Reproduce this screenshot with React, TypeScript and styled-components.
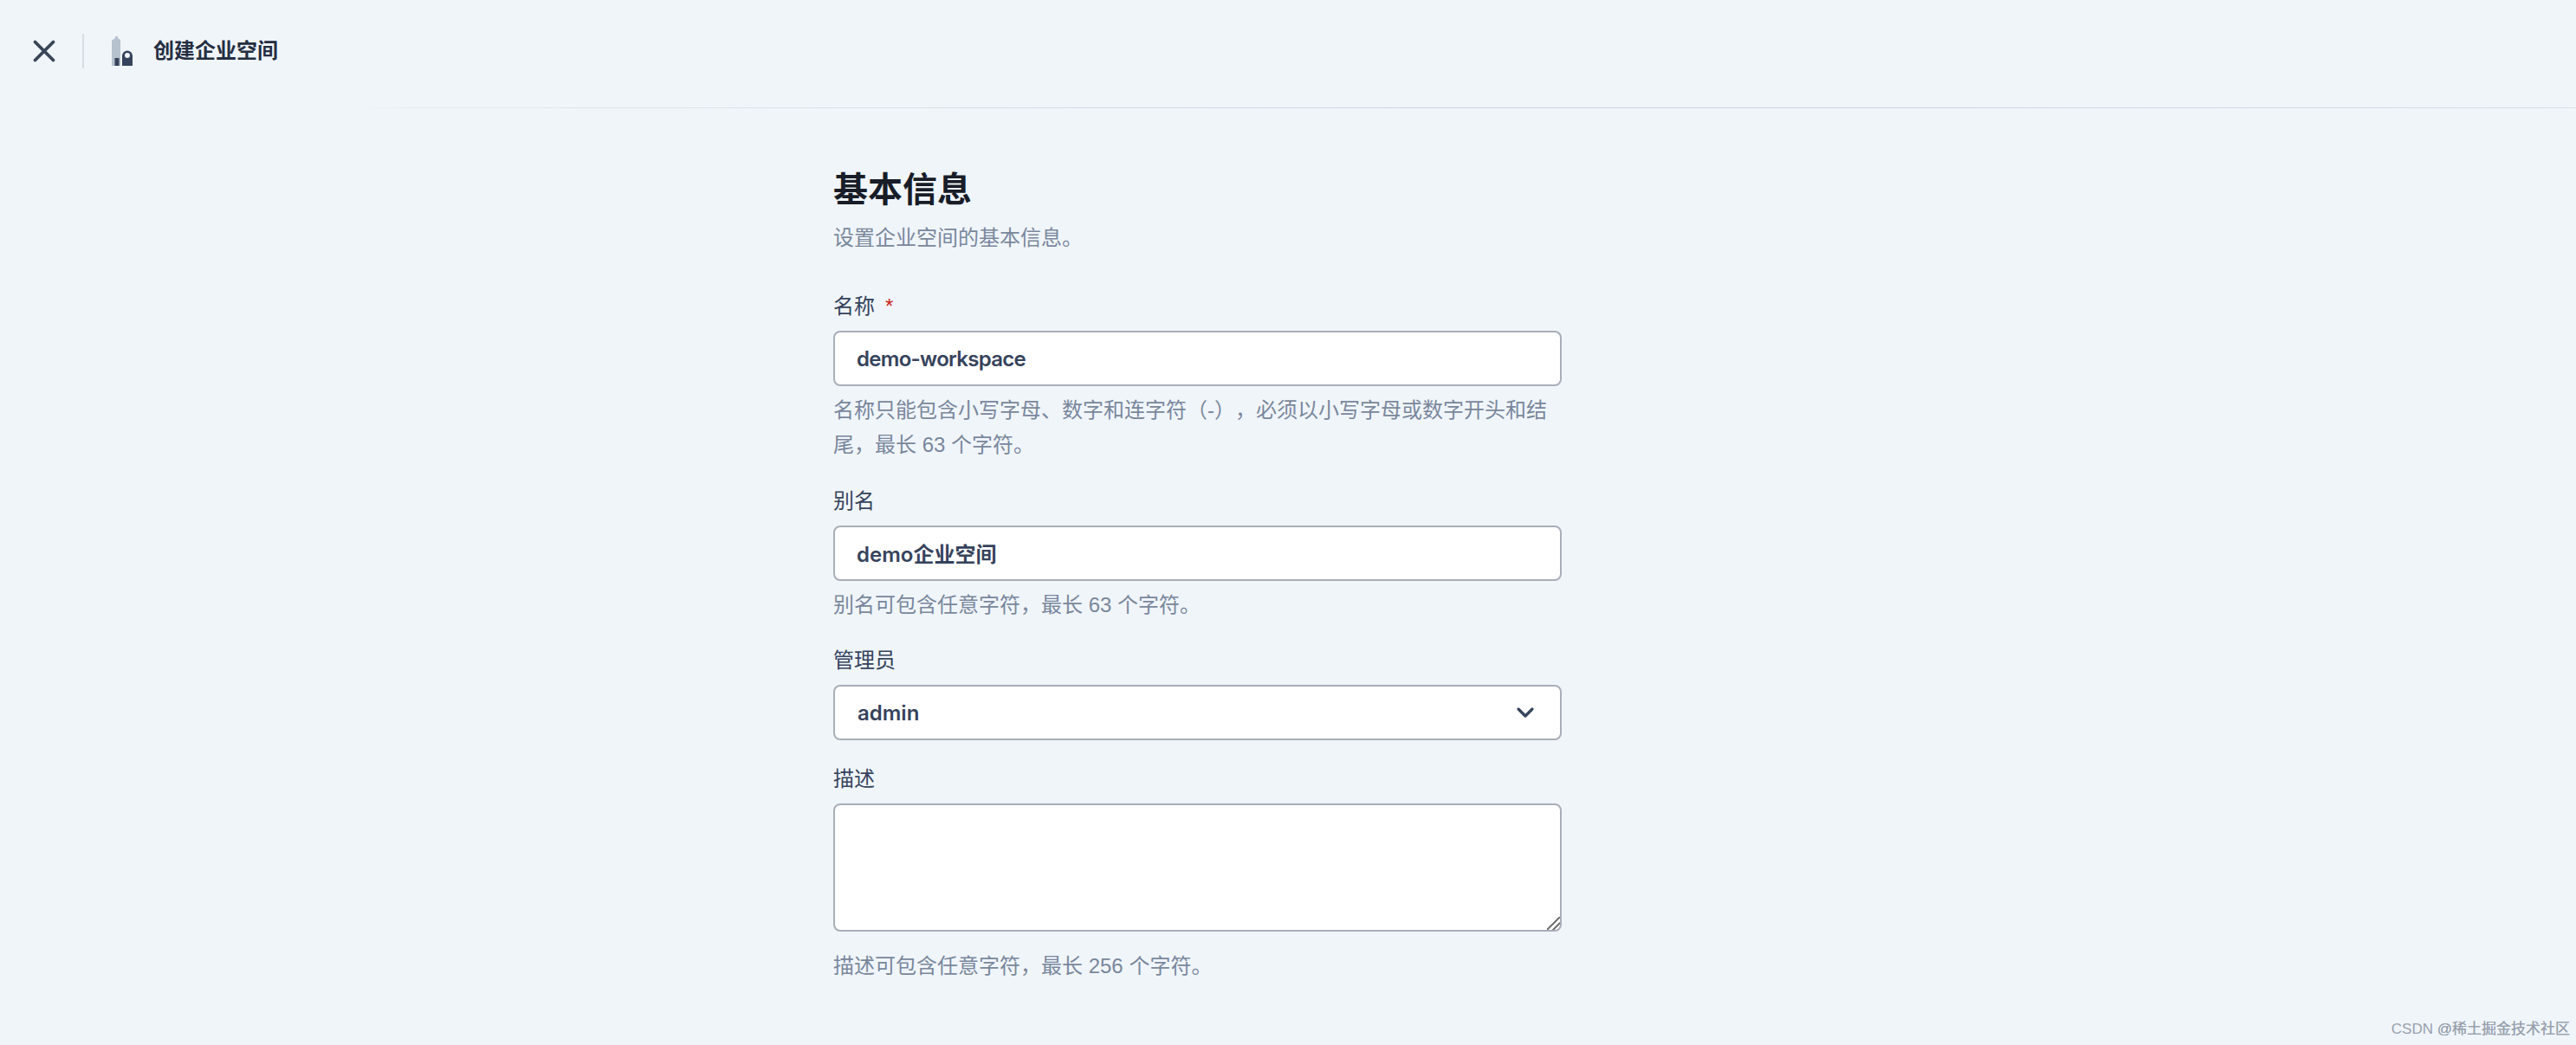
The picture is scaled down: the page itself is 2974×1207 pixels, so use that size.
import * as React from 'react';
import styled, { createGlobalStyle } from 'styled-components';
import { ChevronDown, X } from 'lucide-react';

const fontStack = `"Liberation Sans", "Noto Sans CJK SC", sans-serif`;
const controlFont = `Inter, "Noto Sans CJK SC", sans-serif`;

const GlobalStyle = createGlobalStyle`
  html, body {
    margin: 0;
    padding: 0;
    background: #f0f5fa;
  }
  body {
    font-family: ${fontStack};
    text-spacing-trim: space-all;
    overflow: hidden;
  }
`;

const Page = styled.div`
  position: relative;
  height: 1207px;
  background: #f0f5fa;
  overflow: hidden;
`;

const Header = styled.header`
  box-sizing: border-box;
  height: 125px;
  display: flex;
  align-items: center;
  padding: 0 0 7px 28px;
  border-bottom: 1px solid;
  border-image: linear-gradient(
      90deg,
      rgba(207, 213, 224, 0) 0%,
      rgba(207, 213, 224, 0) 14%,
      rgba(207, 213, 224, 0.35) 16%,
      rgba(207, 213, 224, 0.6) 30%,
      #cfd5e0 55%,
      #cfd5e0 75%,
      rgba(207, 213, 224, 0.7) 100%
    )
    1;
`;

const CloseButton = styled.button`
  width: 46px;
  height: 46px;
  padding: 0;
  border: 0;
  background: none;
  color: #3a4658;
  display: flex;
  align-items: center;
  justify-content: center;
`;

const Divider = styled.span`
  width: 2px;
  height: 40px;
  margin: 0 32px 0 21px;
  background: #d8dee5;
`;

const Title = styled.h1`
  margin: 0 0 0 24px;
  font-size: 24px;
  line-height: 32px;
  font-weight: 700;
  color: #242e42;
`;

const Main = styled.main`
  width: 841px;
  margin-left: 962px;
  padding-top: 70px;
`;

const Heading = styled.h2`
  margin: 0;
  font-size: 40px;
  line-height: 48px;
  font-weight: 700;
  color: #181d28;
`;

const Subheading = styled.p`
  margin: 14px 0 45px;
  font-size: 24px;
  line-height: 36px;
  color: #79879c;
`;

const Field = styled.div`
  margin-bottom: 28.5px;
`;

const Label = styled.label`
  display: block;
  margin-bottom: 12px;
  font-size: 24px;
  line-height: 32px;
  color: #36435c;
`;

const Required = styled.span`
  margin-left: 12px;
  color: #ca2621;
`;

const controlStyle = `
  box-sizing: border-box;
  display: block;
  width: 100%;
  background: #fff;
  border: 2px solid #a9aeb8;
  border-radius: 8px;
  font-family: ${controlFont};
  font-size: 24px;
  font-weight: 600;
  color: #36435c;
  outline: none;
`;

const TextInput = styled.input<{ $tight?: boolean }>`
  ${controlStyle}
  height: 64px;
  padding: 0 25px;
  letter-spacing: ${p => (p.$tight ? '-0.7px' : 'normal')};
`;

const SelectBox = styled.div`
  ${controlStyle}
  height: 64px;
  padding: 0 24px 0 26px;
  display: flex;
  align-items: center;
  justify-content: space-between;
`;

const TextArea = styled.textarea`
  ${controlStyle}
  height: 148px;
  padding: 12px 25px;

  &::-webkit-resizer {
    background: linear-gradient(
      135deg,
      transparent 46%,
      #777 46%,
      #777 54%,
      transparent 54%,
      transparent 70%,
      #777 70%,
      #777 78%,
      transparent 78%
    );
  }
`;

const Help = styled.p`
  margin: 8px 0 0;
  font-size: 24px;
  line-height: 40px;
  color: #79879c;
`;

const AreaHelp = styled(Help)`
  margin-top: 20px;
`;

const Watermark = styled.span`
  position: absolute;
  right: 7px;
  bottom: 4px;
  font-size: 17px;
  line-height: 28px;
  color: #98a1ad;
  white-space: nowrap;
`;

const BuildingIcon = () => (
  <svg width="24" height="34" viewBox="0 0 24 34">
    <path d="M1 4 4 2V0h3v2l3 2v30H0V5z" fill="#b6c2cd" />
    <rect x="3.500" y="25" width="5" height="9" fill="#36435c" />
    <path
      fillRule="evenodd"
      d="M12 34V22.500a6 6 0 0 1 12 0V34zM18 19a3 3 0 1 0 0 6 3 3 0 0 0 0-6z"
      fill="#36435c"
    />
  </svg>
);

const App = () => (
  <Page>
    <GlobalStyle />
    <Header>
      <CloseButton aria-label="关闭">
        <X size={42} strokeWidth={2.2} />
      </CloseButton>
      <Divider />
      <BuildingIcon />
      <Title>创建企业空间</Title>
    </Header>
    <Main>
      <Heading>基本信息</Heading>
      <Subheading>设置企业空间的基本信息。</Subheading>
      <Field>
        <Label>
          名称<Required>*</Required>
        </Label>
        <TextInput $tight defaultValue="demo-workspace" />
        <Help>名称只能包含小写字母、数字和连字符（-），必须以小写字母或数字开头和结尾，最长 63 个字符。</Help>
      </Field>
      <Field>
        <Label>别名</Label>
        <TextInput defaultValue="demo企业空间" />
        <Help>别名可包含任意字符，最长 63 个字符。</Help>
      </Field>
      <Field>
        <Label>管理员</Label>
        <SelectBox>
          admin
          <ChevronDown size={32} strokeWidth={2.4} />
        </SelectBox>
      </Field>
      <Field>
        <Label>描述</Label>
        <TextArea />
        <AreaHelp>描述可包含任意字符，最长 256 个字符。</AreaHelp>
      </Field>
    </Main>
    <Watermark>CSDN @稀土掘金技术社区</Watermark>
    <Watermark>@稀土掘金技术社区</Watermark>
  </Page>
);

export default App;
